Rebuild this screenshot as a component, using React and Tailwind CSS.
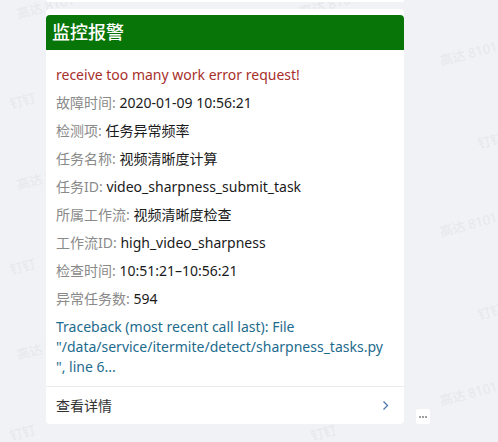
import React from 'react';

const rows = [
  { label: '故障时间', value: '2020-01-09 10:56:21' },
  { label: '检测项', value: '任务异常频率' },
  { label: '任务名称', value: '视频清晰度计算' },
  { label: '任务ID', value: 'video_sharpness_submit_task' },
  { label: '所属工作流', value: '视频清晰度检查' },
  { label: '工作流ID', value: 'high_video_sharpness' },
  { label: '检查时间', value: '10:51:21–10:56:21' },
  { label: '异常任务数', value: '594' },
];

// 背景水印
const marks = [
  { text: '高达 8101', x: 17, y: 8 },
  { text: '高达 8101', x: 300, y: 6 },
  { text: '高达 8101', x: 440, y: 55 },
  { text: '钉钉', x: 10, y: 98 },
  { text: '钉钉 8101', x: 478, y: 138 },
  { text: '高达 8101', x: 17, y: 179 },
  { text: '高达 8101', x: 440, y: 226 },
  { text: '钉钉', x: 10, y: 264 },
  { text: '钉钉 8101', x: 478, y: 309 },
  { text: '高达 8101', x: 17, y: 349 },
  { text: '高达 8101', x: 440, y: 395 },
  { text: '钉钉', x: 10, y: 430 },
  { text: '钉钉', x: 311, y: 430 },
];

const App = () => {
  return (
    <div
      className="relative h-[442px] w-full overflow-hidden bg-[#f1f2f5]"
      style={{ fontFamily: '"Noto Sans", "Noto Sans CJK SC", sans-serif' }}
    >
      {marks.map((m, i) => (
        <span
          key={i}
          className="absolute whitespace-nowrap text-[13px] leading-none text-[#e6e7eb] -rotate-[15deg] origin-left"
          style={{ left: m.x, top: m.y }}
        >
          {m.text}
        </span>
      ))}

      <div className="relative flex flex-col pl-[46px]">
        {/* 上一条消息的底边 */}
        <div className="h-[2px] w-[358px] rounded-b-[4px] bg-white" />

        <div className="mt-[7px] flex items-end gap-3">
          <div className="w-[358px] rounded-[4px] bg-white pt-[6px]">
            <div className="flex h-[35px] items-center rounded-t-[4px] bg-[#077507] px-[6px]">
              <span className="text-[18px] font-medium text-white">监控报警</span>
            </div>

            <div className="flex flex-col gap-2 px-[10px] pt-[15px] pb-[9px] text-[14px] leading-[20px]">
              <div className="text-[#a8302b]">receive too many work error request!</div>
              {rows.map(r => (
                <div key={r.label}>
                  <span className="text-[#8a8a8a]">{r.label}: </span>
                  <span className="text-[#1a1a1a]">{r.value}</span>
                </div>
              ))}
              <div className="text-[#1d6b8d]">
                Traceback (most recent call last): File
                <br />
                "/data/service/itermite/detect/sharpness_tasks.py
                <br />
                ", line 6...
              </div>
            </div>

            <div className="flex h-[38px] items-center justify-between border-t border-[#ebebeb] pl-[10px] pr-[15px] text-[14px] text-[#333]">
              <span>查看详情</span>
              <svg width="7" height="11" viewBox="0 0 7 11" fill="none">
                <path d="M1.5 1.5 L5.5 5.5 L1.5 9.5" stroke="#4f78ad" strokeWidth="1.3" />
              </svg>
            </div>
          </div>

          <div className="flex h-[15px] w-[14px] items-center justify-center gap-[1px] rounded-[2px] bg-white">
            <span className="h-[2px] w-[2px] bg-[#a0a0a0]" />
            <span className="h-[2px] w-[2px] bg-[#a0a0a0]" />
            <span className="h-[2px] w-[2px] bg-[#a0a0a0]" />
          </div>
        </div>
      </div>
    </div>
  );
};

export default App;
